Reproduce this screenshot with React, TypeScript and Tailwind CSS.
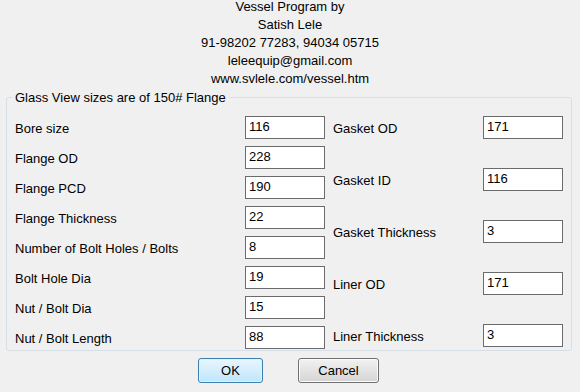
import React from 'react'

const leftFields = [
  { label: 'Bore size', value: '116' },
  { label: 'Flange OD', value: '228' },
  { label: 'Flange PCD', value: '190' },
  { label: 'Flange Thickness', value: '22' },
  { label: 'Number of Bolt Holes / Bolts', value: '8' },
  { label: 'Bolt Hole Dia', value: '19' },
  { label: 'Nut / Bolt Dia', value: '15' },
  { label: 'Nut / Bolt Length', value: '88' },
]

const rightFields = [
  { label: 'Gasket OD', value: '171' },
  { label: 'Gasket ID', value: '116' },
  { label: 'Gasket Thickness', value: '3' },
  { label: 'Liner OD', value: '171' },
  { label: 'Liner Thickness', value: '3' },
]

function Field({ label, value }: { label: string; value: string }) {
  return (
    <div className="flex h-[23px] items-center justify-between">
      <span className="pt-[3px]">{label}</span>
      <input
        defaultValue={value}
        className="h-[23px] w-[80px] border border-[#6b6b6b] bg-white px-[3px] pb-[3px] text-[13px] text-black outline-none"
      />
    </div>
  )
}

function App() {
  return (
    <div
      className="flex h-[392px] w-[580px] flex-col overflow-hidden bg-[#f0f0f0] text-[13px] text-black"
      style={{ fontFamily: '"Liberation Sans", Arial, sans-serif' }}
    >
      {/* about header */}
      <div className="-mt-[2px] text-center leading-[18px]">
        <div>Vessel Program by</div>
        <div>Satish Lele</div>
        <div>91-98202 77283, 94034 05715</div>
        <div>leleequip@gmail.com</div>
        <div>www.svlele.com/vessel.htm</div>
      </div>

      <fieldset className="ml-[6px] mt-[2px] w-[565px] rounded-[3px] border border-[#d5dfe5] px-[8px] pb-[1px] pt-[10px]">
        <legend className="-ml-[3px] px-[3px] leading-[15px]">Glass View sizes are of 150# Flange</legend>
        <div className="flex items-start gap-[8px]">
          <div className="flex w-[310px] flex-col gap-[7px] pt-[1px]">
            {leftFields.map((f) => (
              <Field key={f.label} {...f} />
            ))}
          </div>
          <div className="flex w-[230px] flex-col gap-[29px] pt-[1px]">
            {rightFields.map((f) => (
              <Field key={f.label} {...f} />
            ))}
          </div>
        </div>
      </fieldset>

      <div className="mt-[7px] flex gap-[35px] pl-[198px]">
        <button className="h-[25px] w-[65px] rounded-[3px] border border-[#3c7fb1] bg-gradient-to-b from-[#eaf6fd] to-[#bee6fd] shadow-[inset_0_0_0_1px_#dff2fc]">
          OK
        </button>
        <button className="h-[25px] w-[81px] rounded-[3px] border border-[#707070] bg-gradient-to-b from-[#f2f2f2] to-[#d5d5d5] shadow-[inset_0_0_0_1px_#fbfbfb]">
          Cancel
        </button>
      </div>
    </div>
  )
}

export default App
